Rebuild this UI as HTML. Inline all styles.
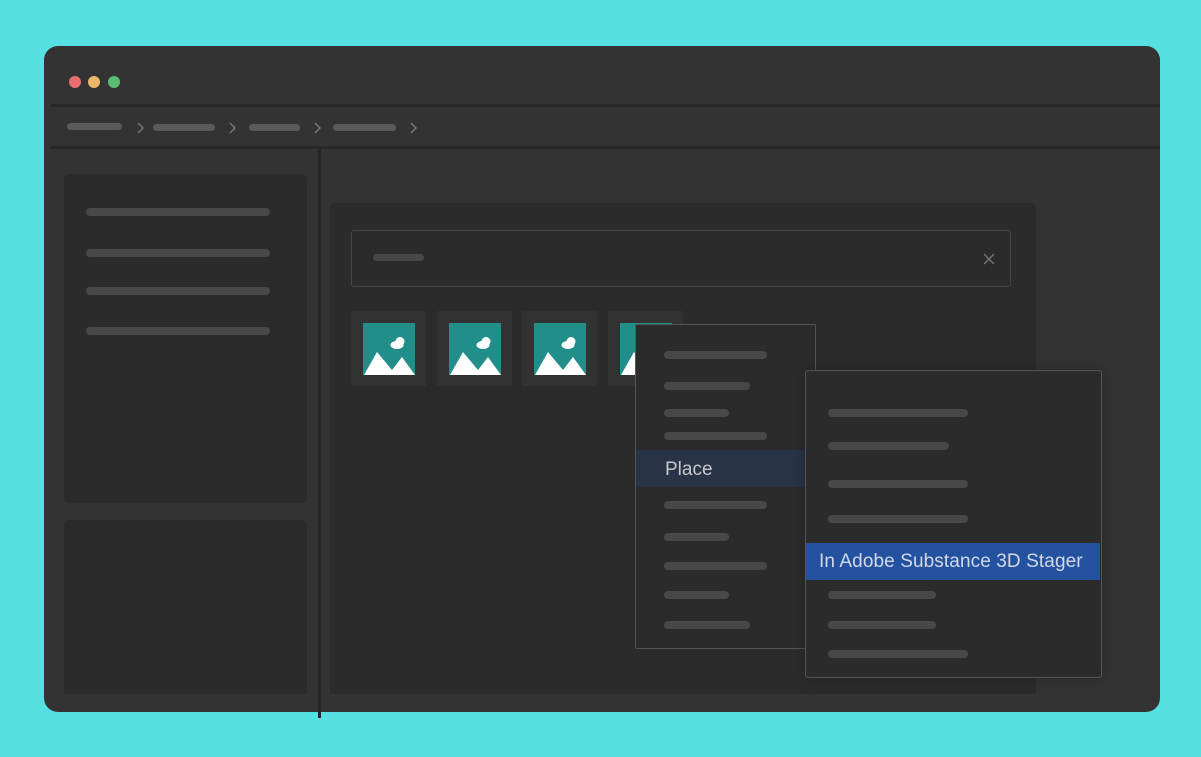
<!DOCTYPE html><html><head><style>
*{margin:0;padding:0;box-sizing:border-box}
body{width:1201px;height:757px;background:#56e0e1;position:relative;overflow:hidden;font-family:"Liberation Sans",sans-serif}
div{position:absolute}
.l{height:8px;border-radius:4px;background:#484848}
.b{height:7px;border-radius:4px;background:#5a5a5a}
.ch{top:121px}
.th{width:75px;height:75px;background:#323232;top:311px}
.th svg{position:absolute;left:12px;top:12px}
</style></head><body>
<div style="left:44px;top:46px;width:1116px;height:666px;background:#333;border-radius:14px"></div>
<div style="left:69px;top:76px;width:12px;height:12px;border-radius:50%;background:#ea6e6e"></div>
<div style="left:88px;top:76px;width:12px;height:12px;border-radius:50%;background:#e9b86d"></div>
<div style="left:108px;top:76px;width:12px;height:12px;border-radius:50%;background:#5bbd73"></div>
<div style="left:51px;top:104px;width:1109px;height:3px;background:#282828"></div>
<div style="left:51px;top:146px;width:1109px;height:3px;background:#282828"></div>
<div class="b" style="left:67px;top:123px;width:55px"></div>
<div class="ch" style="left:136px"><svg width="8" height="12"><path d="M2 1 L7 6 L2 11" stroke="#777" stroke-width="1.5" fill="none"/></svg></div>
<div class="b" style="left:153px;top:124px;width:62px"></div>
<div class="ch" style="left:228px"><svg width="8" height="12"><path d="M2 1 L7 6 L2 11" stroke="#777" stroke-width="1.5" fill="none"/></svg></div>
<div class="b" style="left:249px;top:124px;width:51px"></div>
<div class="ch" style="left:313px"><svg width="8" height="12"><path d="M2 1 L7 6 L2 11" stroke="#777" stroke-width="1.5" fill="none"/></svg></div>
<div class="b" style="left:333px;top:124px;width:63px"></div>
<div class="ch" style="left:409px"><svg width="8" height="12"><path d="M2 1 L7 6 L2 11" stroke="#777" stroke-width="1.5" fill="none"/></svg></div>
<div style="left:318px;top:149px;width:3px;height:569px;background:#262626"></div>
<div style="left:64px;top:174px;width:243px;height:329px;background:#2b2b2b;border-radius:5px"></div>
<div class="l" style="left:86px;top:208px;width:184px"></div>
<div class="l" style="left:86px;top:249px;width:184px"></div>
<div class="l" style="left:86px;top:287px;width:184px"></div>
<div class="l" style="left:86px;top:327px;width:184px"></div>
<div style="left:64px;top:520px;width:243px;height:174px;background:#2b2b2b;border-radius:5px 5px 0 0"></div>
<div style="left:330px;top:203px;width:706px;height:491px;background:#2b2b2b;border-radius:4px 4px 0 0"></div>
<div style="left:351px;top:230px;width:660px;height:57px;border:1px solid #464646;border-radius:3px"></div>
<div class="l" style="left:373px;top:254px;width:51px;height:7px"></div>
<div style="left:983px;top:252px"><svg width="12" height="12"><path d="M1 1 L11 11 M11 1 L1 11" stroke="#777" stroke-width="1.3"/></svg></div>
<div class="th" style="left:351px"><svg width="52" height="52" viewBox="0 0 52 52"><rect width="52" height="52" fill="#218e8a"/><path d="M1 52 L14 29 L29 47 L39 34 L52 52Z" fill="#fff"/><ellipse cx="34" cy="22" rx="6.5" ry="4" fill="#fff"/><circle cx="37" cy="18.5" r="4.5" fill="#fff"/></svg></div>
<div class="th" style="left:437px"><svg width="52" height="52" viewBox="0 0 52 52"><rect width="52" height="52" fill="#218e8a"/><path d="M1 52 L14 29 L29 47 L39 34 L52 52Z" fill="#fff"/><ellipse cx="34" cy="22" rx="6.5" ry="4" fill="#fff"/><circle cx="37" cy="18.5" r="4.5" fill="#fff"/></svg></div>
<div class="th" style="left:522px"><svg width="52" height="52" viewBox="0 0 52 52"><rect width="52" height="52" fill="#218e8a"/><path d="M1 52 L14 29 L29 47 L39 34 L52 52Z" fill="#fff"/><ellipse cx="34" cy="22" rx="6.5" ry="4" fill="#fff"/><circle cx="37" cy="18.5" r="4.5" fill="#fff"/></svg></div>
<div class="th" style="left:608px"><svg width="52" height="52" viewBox="0 0 52 52"><rect width="52" height="52" fill="#218e8a"/><path d="M1 52 L14 29 L29 47 L39 34 L52 52Z" fill="#fff"/><ellipse cx="34" cy="22" rx="6.5" ry="4" fill="#fff"/><circle cx="37" cy="18.5" r="4.5" fill="#fff"/></svg></div>
<div style="left:635px;top:324px;width:181px;height:325px;background:#2b2b2b;border:1px solid #555;border-radius:2px"></div>
<div class="l" style="left:664px;top:351px;width:103px"></div>
<div class="l" style="left:664px;top:382px;width:86px"></div>
<div class="l" style="left:664px;top:409px;width:65px"></div>
<div class="l" style="left:664px;top:432px;width:103px"></div>
<div style="left:636px;top:450px;width:169px;height:37px;background:#283346"></div>
<div style="left:665px;top:459px;color:#c8c8c8;font-size:19px">Place</div>
<div class="l" style="left:664px;top:501px;width:103px"></div>
<div class="l" style="left:664px;top:533px;width:65px"></div>
<div class="l" style="left:664px;top:562px;width:103px"></div>
<div class="l" style="left:664px;top:591px;width:65px"></div>
<div class="l" style="left:664px;top:621px;width:86px"></div>
<div style="left:805px;top:370px;width:297px;height:308px;background:#2b2b2b;border:1px solid #555;border-radius:3px;box-shadow:0 0 12px rgba(0,0,0,.25)"></div>
<div class="l" style="left:828px;top:409px;width:140px"></div>
<div class="l" style="left:828px;top:442px;width:121px"></div>
<div class="l" style="left:828px;top:480px;width:140px"></div>
<div class="l" style="left:828px;top:515px;width:140px"></div>
<div style="left:806px;top:543px;width:294px;height:37px;background:#2452a0"></div>
<div style="left:819px;top:551px;color:#d2d8e6;font-size:19px;letter-spacing:0.1px">In Adobe Substance 3D Stager</div>
<div class="l" style="left:828px;top:591px;width:108px"></div>
<div class="l" style="left:828px;top:621px;width:108px"></div>
<div class="l" style="left:828px;top:650px;width:140px"></div>
</body></html>
